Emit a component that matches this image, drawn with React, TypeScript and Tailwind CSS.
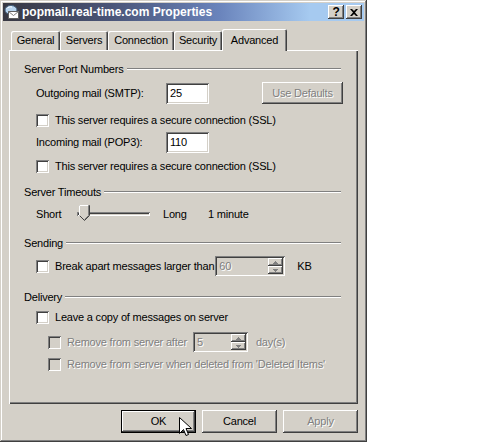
import React from "react";

const raised =
  "shadow-[inset_-1px_-1px_#404040,inset_1px_1px_#ffffff,inset_-2px_-2px_#808080,inset_2px_2px_#d4d0c8]";
const sunken =
  "shadow-[inset_1px_1px_#808080,inset_-1px_-1px_#ffffff,inset_2px_2px_#404040,inset_-2px_-2px_#d4d0c8]";
const disabledText = "text-[#808080] [text-shadow:1px_1px_0_#ffffff]";

function Header({ label, mt }: { label: string; mt: string }) {
  return (
    <div className={`flex items-center h-[14px] pl-[15px] pr-[17px] ${mt}`}>
      <span className="whitespace-nowrap">{label}</span>
      <div className="flex-1 ml-[3px] h-[2px] border-t border-t-[#808080] border-b border-b-white" />
    </div>
  );
}

function Check({ label, disabled }: { label: string; disabled?: boolean }) {
  return (
    <div className="flex items-center h-[13px]">
      <div className={`w-[13px] h-[13px] shrink-0 ${sunken} ${disabled ? "bg-[#d4d0c8]" : "bg-white"}`} />
      <span className={`ml-[6px] whitespace-nowrap ${disabled ? disabledText : ""}`}>{label}</span>
    </div>
  );
}

function Arrow({ up }: { up?: boolean }) {
  return (
    <svg width="5" height="3" viewBox="0 0 5 3">
      <path d={up ? "M2 0h1v1h1v1h1v1H0V2h1V1h1z" : "M0 0h5v1H4v1H3v1H2V2H1V1H0z"} fill="#808080" />
    </svg>
  );
}

function Spin({ value, width }: { value: string; width: string }) {
  return (
    <div className={`flex h-[20px] ${width} p-[2px] bg-[#d4d0c8] ${sunken}`}>
      <span className={`flex-1 pl-[2px] leading-[16px] ${disabledText}`}>{value}</span>
      <div className="flex flex-col w-[15px]">
        <div className={`flex-1 flex items-center justify-center ${raised}`}>
          <Arrow up />
        </div>
        <div className={`flex-1 flex items-center justify-center ${raised}`}>
          <Arrow />
        </div>
      </div>
    </div>
  );
}

function Tab({ label, width }: { label: string; width: string }) {
  return (
    <div
      className={`h-[19px] ${width} flex items-center justify-center rounded-tl-[2px] rounded-tr-[2px] shadow-[inset_1px_1px_#ffffff,inset_-1px_0_#404040,inset_-2px_0_#808080]`}
    >
      {label}
    </div>
  );
}

export default function App() {
  return (
    <div className="min-h-screen bg-white font-['Liberation_Sans',Arial,sans-serif] text-[11px] tracking-[-0.2px] text-black">
      <div
        className="relative w-[367px] h-[442px] bg-[#d4d0c8] p-[3px] flex flex-col shadow-[inset_-1px_-1px_#404040,inset_1px_1px_#d4d0c8,inset_-2px_-2px_#808080,inset_2px_2px_#ffffff]"
      >
        {/* title bar */}
        <div className="h-[18px] flex items-center pl-[1px] pr-[2px] bg-[linear-gradient(to_right,#383842,#4a5578_30%,#6a84bc_60%,#a6caf0_85%)]">
          <svg width="16" height="16" viewBox="0 0 16 16" className="shrink-0">
            <ellipse cx="7" cy="6" rx="6" ry="4.5" fill="#b8d4ee" stroke="#44607c" />
            <path d="M3 4.5c1-1.5 3-2 5-1.5" stroke="#ffffff" fill="none" />
            <rect x="4.5" y="7.5" width="10" height="7" fill="#ffffff" stroke="#606060" />
            <path d="M4.5 7.5l5 4 5-4" stroke="#808080" fill="none" />
          </svg>
          <span className="ml-[2px] font-bold text-[12px] tracking-normal text-white whitespace-nowrap">
            popmail.real-time.com Properties
          </span>
          <div className="flex-1" />
          <div className={`w-[16px] h-[14px] bg-[#d4d0c8] flex items-center justify-center font-bold text-[12px] leading-none ${raised}`}>
            ?
          </div>
          <div className={`ml-[2px] w-[16px] h-[14px] bg-[#d4d0c8] flex items-center justify-center ${raised}`}>
            <svg width="8" height="7" viewBox="0 0 8 7">
              <path d="M0 0h2l2 2 2-2h2L5 3.5 8 7H6L4 5 2 7H0l3-3.5z" fill="#000000" />
            </svg>
          </div>
        </div>

        {/* tabs */}
        <div className="mt-[8px] h-[21px] flex items-end pl-[8px]">
          <Tab label="General" width="w-[49px]" />
          <Tab label="Servers" width="w-[48px]" />
          <Tab label="Connection" width="w-[66px]" />
          <Tab label="Security" width="w-[48px]" />
          <div className="relative z-10 -mb-px h-[22px] w-[65px] bg-[#d4d0c8] flex items-start justify-center pt-[3px] rounded-tl-[2px] rounded-tr-[2px] shadow-[inset_1px_1px_#ffffff,inset_-1px_0_#404040,inset_-2px_0_#808080]">
            Advanced
          </div>
        </div>

        {/* panel */}
        <div className="ml-[6px] w-[349px] h-[354px] flex flex-col shadow-[inset_1px_1px_#ffffff,inset_-1px_-1px_#404040,inset_-2px_-2px_#808080]">
          <Header label="Server Port Numbers" mt="mt-[12px]" />

          <div className="mt-[6px] h-[22px] flex items-center pl-[27px]">
            <span className="w-[130px]">Outgoing mail (SMTP):</span>
            <div className={`w-[43px] h-[21px] bg-white pl-[4px] leading-[21px] ${sunken}`}>25</div>
            <div className={`ml-[53px] w-[81px] h-[22px] flex items-center justify-center ${raised} ${disabledText}`}>
              Use Defaults
            </div>
          </div>

          <div className="mt-[10px] pl-[27px]">
            <Check label="This server requires a secure connection (SSL)" />
          </div>

          <div className="mt-[5px] h-[21px] flex items-center pl-[27px]">
            <span className="w-[130px]">Incoming mail (POP3):</span>
            <div className={`w-[43px] h-[21px] bg-white pl-[4px] leading-[21px] ${sunken}`}>110</div>
          </div>

          <div className="mt-[7px] pl-[27px]">
            <Check label="This server requires a secure connection (SSL)" />
          </div>

          <Header label="Server Timeouts" mt="mt-[12px]" />

          <div className="mt-[6px] h-[18px] flex items-center pl-[27px]">
            <span className="w-[36px]">Short</span>
            <div className="w-[78px] h-[16px] flex items-center pl-[5px]">
              <div className="relative flex-1 h-[4px] shadow-[inset_1px_1px_#808080,inset_-1px_-1px_#ffffff,inset_2px_2px_#404040,inset_-2px_-2px_#d4d0c8]">
                <svg width="11" height="16" viewBox="0 0 11 16" className="absolute left-[2px] -top-[7px]">
                  <path d="M0.5 0.5h10v10l-5 5-5-5z" fill="#d4d0c8" stroke="#404040" />
                  <path d="M0.5 10.5v-10h9" fill="none" stroke="#ffffff" />
                  <path d="M9.5 1v9.5l-4 4" fill="none" stroke="#808080" />
                </svg>
              </div>
            </div>
            <span className="ml-[13px] w-[45px]">Long</span>
            <span>1 minute</span>
          </div>

          <Header label="Sending" mt="mt-[13px]" />

          <div className="mt-[6px] h-[20px] flex items-center pl-[27px]">
            <Check label="Break apart messages larger than" />
            <div className="ml-[1px]">
              <Spin value="60" width="w-[70px]" />
            </div>
            <span className="ml-[12px]">KB</span>
          </div>

          <Header label="Delivery" mt="mt-[14px]" />

          <div className="mt-[7px] pl-[27px]">
            <Check label="Leave a copy of messages on server" />
          </div>

          <div className="mt-[8px] h-[20px] flex items-center pl-[39px]">
            <Check label="Remove from server after" disabled />
            <div className="ml-[6px]">
              <Spin value="5" width="w-[55px]" />
            </div>
            <span className={`ml-[8px] ${disabledText}`}>day(s)</span>
          </div>

          <div className="mt-[6px] pl-[39px]">
            <Check label="Remove from server when deleted from 'Deleted Items'" disabled />
          </div>
        </div>

        {/* buttons */}
        <div className="mt-[6px] flex justify-end gap-[6px] pr-[6px]">
          <div className="w-[75px] h-[23px] border border-black flex">
            <div className={`flex-1 flex items-center justify-center ${raised}`}>OK</div>
          </div>
          <div className={`w-[75px] h-[23px] flex items-center justify-center ${raised}`}>Cancel</div>
          <div className={`w-[75px] h-[23px] flex items-center justify-center ${raised} ${disabledText}`}>Apply</div>
        </div>

        {/* mouse pointer */}
        <svg width="13" height="21" viewBox="0 0 13 21" className="absolute left-[179px] top-[417px]">
          <path d="M0.5 0.5v16l4-4 2.5 6 2.5-1-2.5-6h5.5z" fill="#ffffff" stroke="#000000" />
        </svg>
      </div>
    </div>
  );
}
